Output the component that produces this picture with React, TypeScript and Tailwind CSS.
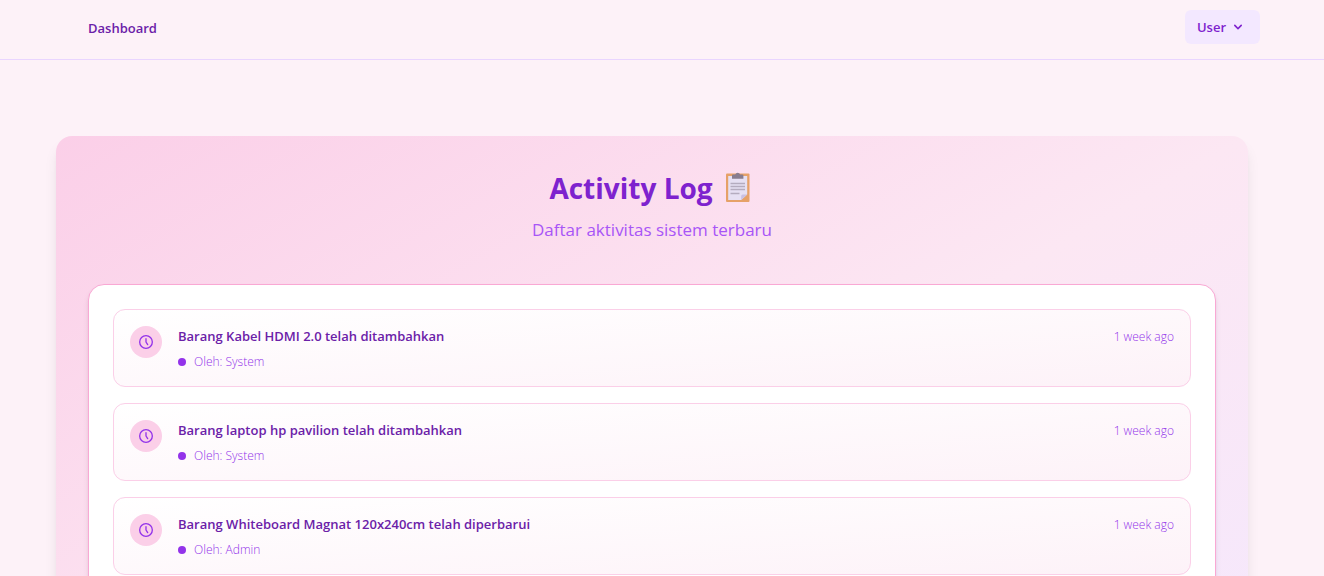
import React from 'react';

type Activity = { id: number; title: string; actor: string; time: string };

const activities: Activity[] = [
  { id: 1, title: 'Barang Kabel HDMI 2.0 telah ditambahkan', actor: 'System', time: '1 week ago' },
  { id: 2, title: 'Barang laptop hp pavilion telah ditambahkan', actor: 'System', time: '1 week ago' },
  { id: 3, title: 'Barang Whiteboard Magnat 120x240cm telah diperbarui', actor: 'Admin', time: '1 week ago' },
];

function ClipboardIcon() {
  return (
    <svg className="h-8 w-8" viewBox="-3 0 32 32" aria-hidden="true">
      <rect x="0" y="1.500" width="23.500" height="28.500" rx="1" fill="#e6a168" />
      <path d="M2.200 4h19v18.500l-6 5.500h-13z" fill="#e6e0f3" />
      <path d="M15.200 28v-4q0-1.500 1.500-1.500h4.500z" fill="#c9c0e2" />
      <path d="M7 2.500h2.200Q10 .8 11.700.8t2.500 1.700h2.200q1 0 1 1v3.300H6V3.500q0-1 1-1z" fill="#887d8f" />
      <path d="M4.500 11.500h14.500M4.500 14.500h14.500M4.500 17.500h14.500M4.500 21.500h9" stroke="#b4acbf" strokeWidth="1.300" />
    </svg>
  );
}

function ClockIcon() {
  return (
    <svg className="h-4 w-4 text-[#9333ea]" viewBox="0 0 24 24" fill="none" stroke="currentColor" strokeWidth="2" strokeLinecap="round" strokeLinejoin="round" aria-hidden="true">
      <circle cx="12" cy="12" r="9.500" />
      <path d="M12 7v5l2.500 4" />
    </svg>
  );
}

function ActivityItem({ activity }: { activity: Activity }) {
  return (
    <li className="flex items-start gap-4 rounded-xl border border-[#fbcfe8] bg-linear-to-br from-white to-[#fdf2f8] p-4">
      <span className="flex h-8 w-8 shrink-0 items-center justify-center rounded-full bg-[#fbcfe8]">
        <ClockIcon />
      </span>
      <div className="min-w-0 flex-1">
        <div className="flex items-end justify-between gap-4">
          <p className="text-[13px] leading-5 font-semibold text-[#6b21a8]">{activity.title}</p>
          <span className="shrink-0 text-xs leading-[18px] font-light text-[#9333ea]">{activity.time}</span>
        </div>
        <p className="mt-2 flex items-center gap-2 text-xs font-light text-[#9333ea]">
          <span className="h-2 w-2 rounded-full bg-[#9333ea]" />
          Oleh: {activity.actor}
        </p>
      </div>
    </li>
  );
}

export default function App() {
  return (
    <div className="min-h-screen bg-[#fdf2f8] font-['Open_Sans',sans-serif]">
      <nav className="flex h-15 items-start justify-between border-b border-[#e9d5ff] pt-2.5 pr-16 pl-22">
        <a href="#dashboard" className="pt-2 text-[13px] leading-5 font-semibold text-[#6b21a8]">Dashboard</a>
        <button type="button" className="flex items-center gap-1 rounded-md bg-[#f3e8ff] py-2 pr-3.5 pl-3 text-[13px] leading-[18px] font-semibold text-[#7e22ce]">
          User
          <svg className="h-4 w-4" viewBox="0 0 20 20" fill="currentColor" aria-hidden="true">
            <path fillRule="evenodd" clipRule="evenodd" d="M5.293 7.293a1 1 0 011.414 0L10 10.586l3.293-3.293a1 1 0 111.414 1.414l-4 4a1 1 0 01-1.414 0l-4-4a1 1 0 010-1.414z" />
          </svg>
        </button>
      </nav>
      <main className="pt-19 pr-19 pb-12 pl-14">
        <section className="flex min-h-[684px] flex-col rounded-2xl bg-linear-to-br from-[#fbcfe8] via-[#fce7f3] to-[#f3e8ff] p-8 shadow-lg">
          <header className="mb-10 flex flex-col items-center">
            <h1 className="flex items-center gap-2.5 text-[28px] leading-10 font-bold text-[#7e22ce]">
              Activity Log
              <ClipboardIcon />
            </h1>
            <p className="mt-2 text-[17px] leading-7 text-[#a855f7]">Daftar aktivitas sistem terbaru</p>
          </header>
          <div className="flex-1 rounded-2xl border border-[#f9a8d4] bg-white p-6 shadow-md">
            <ul className="flex flex-col gap-4">
              {activities.map((activity) => (
                <ActivityItem key={activity.id} activity={activity} />
              ))}
            </ul>
          </div>
        </section>
      </main>
    </div>
  );
}
